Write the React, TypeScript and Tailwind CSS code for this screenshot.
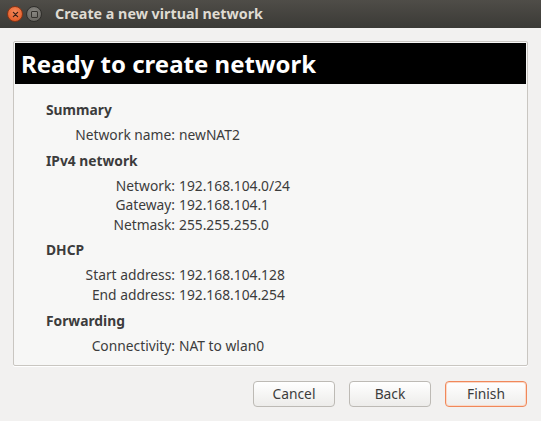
import React from 'react'

interface SummaryRow {
  label: string
  value: string
}

interface SummarySection {
  title: string
  rows: SummaryRow[]
}

const sections: SummarySection[] = [
  { title: 'Summary', rows: [{ label: 'Network name:', value: 'newNAT2' }] },
  {
    title: 'IPv4 network',
    rows: [
      { label: 'Network:', value: '192.168.104.0/24' },
      { label: 'Gateway:', value: '192.168.104.1' },
      { label: 'Netmask:', value: '255.255.255.0' },
    ],
  },
  {
    title: 'DHCP',
    rows: [
      { label: 'Start address:', value: '192.168.104.128' },
      { label: 'End address:', value: '192.168.104.254' },
    ],
  },
  { title: 'Forwarding', rows: [{ label: 'Connectivity:', value: 'NAT to wlan0' }] },
]

const DialogButton: React.FC<{ label: string; focused?: boolean }> = ({ label, focused }) => (
  <button
    className={
      focused
        ? 'h-[26px] w-[82px] rounded-[4px] border border-[#f0885a] bg-gradient-to-b from-[#ffffff] to-[#efeeec] text-[13.8px] text-[#3c3c3c] shadow-[inset_0_0_0_1px_#fbd9c8]'
        : 'h-[26px] w-[82px] rounded-[4px] border border-[#bdbab5] bg-gradient-to-b from-[#ffffff] to-[#edecea] text-[13.8px] text-[#3c3c3c]'
    }
  >
    {label}
  </button>
)

export default function App() {
  return (
    <div
      className="flex h-[421px] w-[541px] flex-col overflow-hidden bg-[#f2f1f0] text-[#3c3c3c]"
      style={{ fontFamily: '"Noto Sans", "DejaVu Sans", sans-serif' }}
    >
      {/* Title bar */}
      <div className="flex h-[28px] shrink-0 items-center bg-gradient-to-b from-[#4f4d48] to-[#3b3a36] pl-[7px]">
        <div className="flex h-[16px] w-[16px] items-center justify-center rounded-full border border-[#8a3414] bg-[radial-gradient(circle_at_50%_35%,#f58a5c,#e0531c)]">
          <svg viewBox="0 0 10 10" className="h-[7px] w-[7px]">
            <path d="M2 2 L8 8 M8 2 L2 8" stroke="#3a2117" strokeWidth="1.8" strokeLinecap="round" />
          </svg>
        </div>
        <div className="ml-[3px] flex h-[16px] w-[16px] items-center justify-center rounded-full border border-[#2f2e2b] bg-[radial-gradient(circle_at_50%_35%,#8a8883,#5f5d58)]">
          <div className="h-[7px] w-[7px] rounded-[1px] border border-[#35332f]" />
        </div>
        <span className="ml-[13px] text-[14.3px] font-bold text-[#dfdbd2]">Create a new virtual network</span>
      </div>

      {/* Content frame */}
      <div className="mx-[13px] mt-[13px] flex h-[325px] flex-col rounded-[2px] border border-[#c9c6c1] bg-[#f7f7f6] p-px shadow-[0_1px_0_#ffffff]">
        <div className="flex h-[41px] items-center bg-black pl-[6px]">
          <span className="text-[24px] font-bold leading-none text-white">Ready to create network</span>
        </div>

        <div className="flex flex-col gap-[6px] pl-[31px] pt-[16px] text-[13.8px]">
          {sections.map((section) => (
            <div key={section.title} className="flex flex-col">
              <div className="mb-[5px] h-[20px] font-bold leading-[20px]">{section.title}</div>
              {section.rows.map((row) => (
                <div key={row.label} className="grid h-[19.6px] grid-cols-[129px_1fr] gap-x-[4px] leading-[19.6px]">
                  <span className="text-right">{row.label}</span>
                  <span>{row.value}</span>
                </div>
              ))}
            </div>
          ))}
        </div>
      </div>

      {/* Action buttons */}
      <div className="mt-[15px] flex justify-end gap-[14px] pr-[14px]">
        <DialogButton label="Cancel" />
        <DialogButton label="Back" />
        <DialogButton label="Finish" focused />
      </div>
    </div>
  )
}
